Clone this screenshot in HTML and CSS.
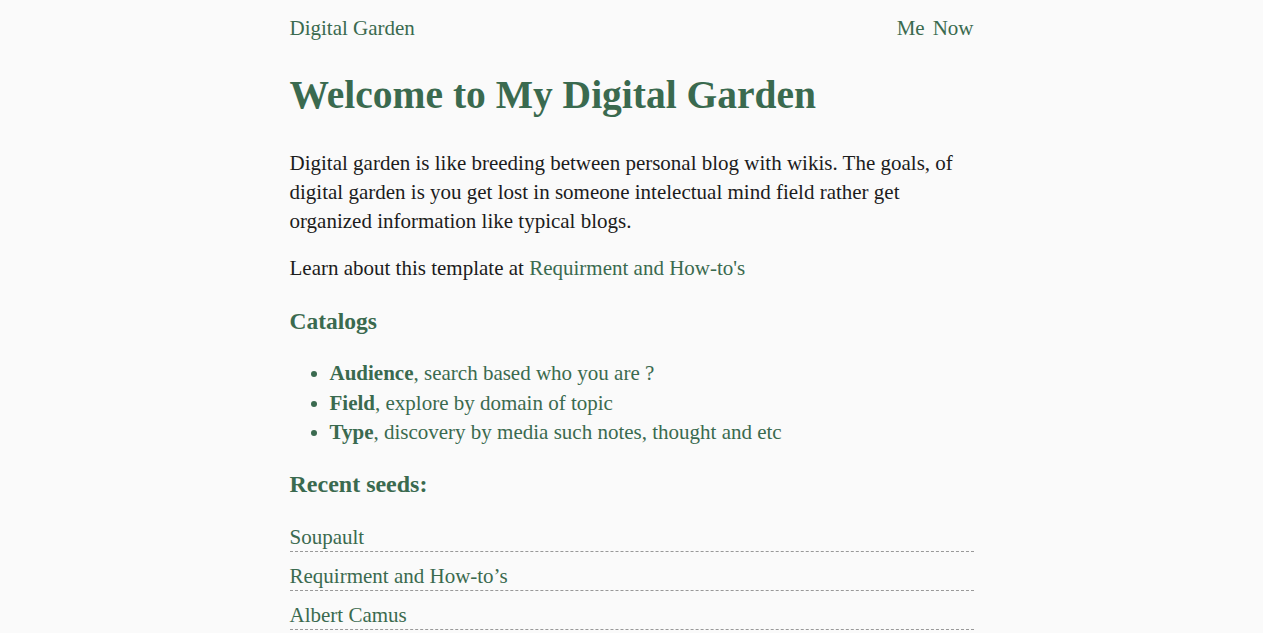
FILE: index.html
```html
<!DOCTYPE html>
<html lang="en">
<head>
<meta charset="utf-8">
<title>Digital Garden</title>
<link rel="stylesheet" href="styles.css">
</head>
<body>
<div class="page">
  <header class="site-header">
    <a class="brand" href="#">Digital Garden</a>
    <nav class="nav">
      <a href="#">Me</a>
      <a href="#">Now</a>
    </nav>
  </header>
  <main>
    <h1 class="title">Welcome to My Digital Garden</h1>
    <p class="text">Digital garden is like breeding between personal blog with wikis. The goals, of digital garden is you get lost in someone intelectual mind field rather get organized information like typical blogs.</p>
    <p class="text">Learn about this template at <a class="link" href="#">Requirment and How-to's</a></p>
    <h3 class="section">Catalogs</h3>
    <ul class="catalog">
      <li><b>Audience</b>, search based who you are ?</li>
      <li><b>Field</b>, explore by domain of topic</li>
      <li><b>Type</b>, discovery by media such notes, thought and etc</li>
    </ul>
    <h3 class="section seeds-title">Recent seeds:</h3>
    <div class="seeds">
      <a class="seed" href="#">Soupault</a>
      <a class="seed" href="#">Requirment and How-to’s</a>
      <a class="seed" href="#">Albert Camus</a>
    </div>
  </main>
</div>
</body>
</html>
```

FILE: styles.css
```css
html, body {
  margin: 0;
  padding: 0;
  background: #fafafa;
}
body {
  font-family: "Liberation Serif", "Times New Roman", serif;
  color: #1c1c1c;
  font-size: 21px;
}
a {
  color: #3a6a4f;
  text-decoration: none;
}
.page {
  max-width: 684px;
  margin: 0 auto;
}
.site-header {
  display: flex;
  justify-content: space-between;
  align-items: center;
  height: 56px;
}
.brand {
  font-size: 21px;
}
.nav {
  display: flex;
  gap: 8px;
}
.nav a {
  font-size: 21px;
}
.title {
  margin: 14px 0 29px;
  font-size: 39.5px;
  font-weight: bold;
  color: #3a6a4f;
  line-height: 50px;
}
.text {
  margin: 0 0 18px;
  line-height: 29px;
}
.section {
  margin: 24px 0 24px;
  font-size: 23.5px;
  font-weight: bold;
  color: #3a6a4f;
  line-height: 28px;
}
.catalog {
  margin: 0;
  padding-left: 40px;
  color: #3a6a4f;
}
.catalog li {
  line-height: 29.5px;
}
.seeds-title {
  margin-top: 22px;
  margin-bottom: 23px;
  font-size: 24px;
}
.seeds {
  display: flex;
  flex-direction: column;
}
.seed {
  display: block;
  padding-top: 2px;
  line-height: 28px;
  border-bottom: 1px dashed #999;
  margin-bottom: 8px;
}
```
